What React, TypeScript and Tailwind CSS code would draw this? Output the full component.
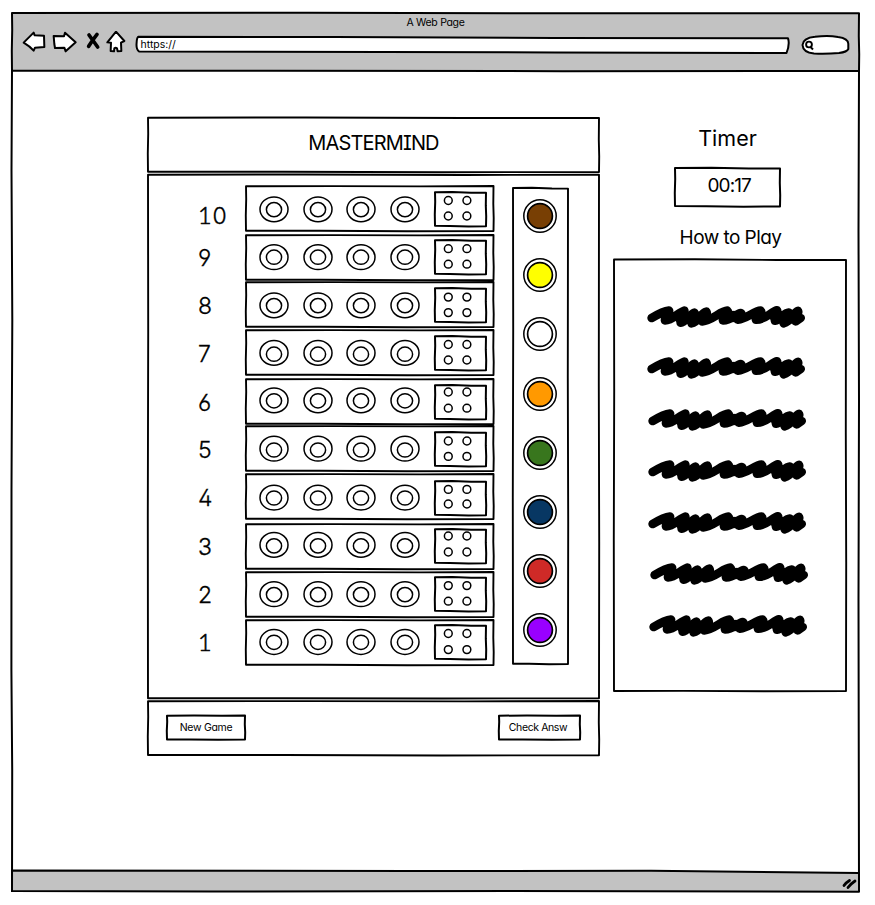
import type { ReactNode } from "react";

type Pt = [number, number];

const ui = "font-['Inter','Lato',sans-serif] [font-feature-settings:'cv11','cv08','cv02','cv03','cv04']";

/* Hand-drawn rectangle behind the content of a box. */
function Sketch({ w, h, skew = [], stroke = 1.9, fill = "white" }: { w: number; h: number; skew?: number[]; stroke?: number; fill?: string }) {
  const [a = 0, b = 0, c = 0, d = 0] = skew;
  const p: Pt[] = [[1, 1 + a], [w - 1, 1 + b], [w - 1, h - 1 + c], [1, h - 1 + d]];
  return (
    <svg className="absolute inset-0 overflow-visible" width={w} height={h} fill={fill} stroke="black" strokeWidth={stroke} strokeLinejoin="round">
      <path
        d={`M${p[0]} L${w * 0.35} ${0.8 + a} L${w * 0.7} ${1.2 + (a + b) / 2} L${p[1]} L${w - 1.2} ${h * 0.4} L${w - 0.8} ${h * 0.7} L${p[2]} L${w * 0.65} ${h - 0.8 + c} L${w * 0.3} ${h - 1.1 + (c + d) / 2} L${p[3]} L0.8 ${h * 0.65} L1.2 ${h * 0.3}Z`}
      />
    </svg>
  );
}

function Box({ w, h, className = "", skew, stroke, fill, children }: { w: number; h: number; className?: string; skew?: number[]; stroke?: number; fill?: string; children?: ReactNode }) {
  return (
    <div className={`relative shrink-0 ${className}`} style={{ width: w, height: h }}>
      <Sketch w={w} h={h} skew={skew} stroke={stroke} fill={fill} />
      {children}
    </div>
  );
}

/* Line centres measured down the board: frame, sockets, inner rings, peg frame, pegs, label. */
const rows = [
  { n: "10", top: 186, ring: 209.3, inner: 209.6, pegBox: 192, pegs: [200.5, 216], label: 216 },
  { n: "9", top: 235, ring: 257.2, inner: 257.2, pegBox: 240, pegs: [248.7, 264.2], label: 258 },
  { n: "8", top: 282.2, ring: 305.5, inner: 305.8, pegBox: 287.6, pegs: [296.7, 312.2], label: 306 },
  { n: "7", top: 330.3, ring: 353.2, inner: 354.5, pegBox: 336.2, pegs: [344.7, 360.2], label: 353.8 },
  { n: "6", top: 379, ring: 400.4, inner: 400.8, pegBox: 385, pegs: [392, 408.2], label: 402.8 },
  { n: "5", top: 426.5, ring: 449.2, inner: 450.5, pegBox: 431.8, pegs: [440.8, 456.2], label: 450.2 },
  { n: "4", top: 474.5, ring: 498.2, inner: 498.5, pegBox: 481.2, pegs: [489.6, 504.2], label: 498 },
  { n: "3", top: 524, ring: 544.9, inner: 545.9, pegBox: 529.2, pegs: [536.2, 552.2], label: 547 },
  { n: "2", top: 572, ring: 594.2, inner: 594.6, pegBox: 577, pegs: [585.6, 601.2], label: 595.1 },
  { n: "1", top: 620.2, ring: 642.2, inner: 642.5, pegBox: 625.2, pegs: [633.7, 649.8], label: 642.6 },
];

const colours = ["#783f04", "#ffff00", "#ffffff", "#ff9900", "#38761d", "#073763", "#cf2a27", "#9900ff"];
const hints = [0.3, 0.3, 1.3, 1.8, 1.8, 3.5, 2.8];

function Digits({ n }: { n: string }) {
  return (
    <>
      {n.split("").map((d, i) => (
        <span key={i} className={d === "1" ? "font-['Lato',sans-serif] text-[23.5px] font-light tracking-[0.8px] [-webkit-text-stroke:0.6px_black]" : "text-[23px] font-light [-webkit-text-stroke:0.3px_black]"}>{d}</span>
      ))}
    </>
  );
}

function Row({ r, next }: { r: (typeof rows)[number]; next: number }) {
  return (
    <div className="flex items-start" style={{ height: next - r.top }}>
      <div className="flex h-6 w-[47px] shrink-0 items-center" style={{ marginTop: r.label - r.top - 11 }}>
        <Digits n={r.n} />
      </div>
      <Box w={249.5} h={47} skew={[0.3, 0, 0, -0.3]} className="flex">
        <div className="relative flex pl-[13.5px]">
          {[44, 43.3, 44, 44].map((w, i) => (
            <svg key={i} width={w} height={47} fill="none" stroke="black" strokeWidth="1.5">
              <ellipse cx="15" cy={r.ring - r.top + 1} rx="14" ry="12.4" />
              <ellipse cx="15" cy={r.inner - r.top + 1} rx="7.6" ry="7.1" />
            </svg>
          ))}
        </div>
        <div style={{ paddingTop: r.pegBox - r.top }}>
          <Box w={53} h={36} skew={[0.3, 0.7, 0.2, -0.2]} stroke={2}>
            <svg className="relative" width={53} height={36} fill="none" stroke="black" strokeWidth="1.5">
              {r.pegs.map((y) => [14.3, 32.9].map((x) => <circle key={`${x}-${y}`} cx={x} cy={y - r.pegBox + 1} r="3.9" />))}
            </svg>
          </Box>
        </div>
      </Box>
    </div>
  );
}

function Toolbar() {
  return (
    <header className="relative h-[58px] w-[847px]">
      <Box w={849} h={60} fill="#c2c2c2" skew={[0, 0.3, 0, -0.3]} stroke={2} className="-ml-px">
        <div className={`relative flex h-[20px] items-center justify-center pt-[3px] text-[10.5px] leading-none ${ui}`}>
          <span className="tracking-[-0.3px]">A Web Page</span>
        </div>
        <div className="relative flex items-start">
          <svg className="ml-[11px] -mt-[1px]" width="113" height="26" viewBox="66 92 339 78" fill="white" stroke="black" strokeWidth="6" strokeLinejoin="round" strokeLinecap="round">
            <path d="M71 127 101 97l3 8 28 1 1 34-28 2-4 9q-10-12-30-24Z" />
            <path d="m161 107 31 1 3-11 32 29-30 27-4-11-28 1-2-12Z" />
            <path d="m267 104 26 36M291 102q-12 15-25 36" strokeWidth="11" />
            <path d="m348 94 25 28-10 5 1 25-11 1-2-9q-4-3-8 0l-1 9-10-1 1-25-11-1Z" />
          </svg>
          <div className="relative h-[22px] w-[655px]">
            <svg className="absolute inset-0" width="655" height="22" fill="white" stroke="black" strokeWidth="2" strokeLinejoin="round">
              <path d="M3.5 4.7 200 5 420 6 653 6.3Q655 12 651.5 21L420 20.4 4 19.4Q1 17.5 1.6 11Q1.8 5.5 3.5 4.7Z" />
            </svg>
            <span className={`relative block pl-[5.5px] pt-[6.5px] text-[10.5px] leading-[12px] ${ui}`}>https://</span>
          </div>
          <svg className="ml-[10px] mt-[1.5px]" width="52" height="24" fill="white" stroke="black" strokeWidth="2">
            <path d="M2.5 11Q3 4 15 2.8 28 .9 38 3 48.5 4.500 48.3 10L48.3 15Q47 18 39 19 27 20 14 19.5 3 18.5 2.5 11Z" />
            <circle cx="9" cy="10.5" r="2.9" strokeWidth="1.9" />
            <path d="m10.5 13 2.5 2.5" />
          </svg>
        </div>
      </Box>
    </header>
  );
}

function Board() {
  return (
    <section className={`w-[453px] ${ui}`}>
      <Box w={453} h={56} className="flex items-center justify-center" skew={[-0.3, 0, 0, -0.3]}>
        <h1 className="relative -mt-[5px] text-[20px] font-normal leading-none tracking-[-0.85px]">MASTERMIND</h1>
      </Box>
      <Box w={453} h={525} className="mt-px flex pl-[51px] pt-[11px]" skew={[-0.3, -0.2, 0.3, 0.3]}>
        <div className="relative w-[297px]">
          {rows.map((r, i) => <Row key={r.n} r={r} next={rows[i + 1]?.top ?? 668} />)}
        </div>
        <Box w={57} h={478} skew={[0, 0.6, 0, -0.3]} className="mt-[2px] ml-[17px] flex flex-col items-center pt-[12.2px]">
          {colours.map((c) => (
            <svg key={c} className="relative -left-[0.5px] shrink-0" width="34" height="59.15" stroke="black" strokeWidth="1.5">
              <circle cx="17" cy="17" r="16.2" fill="white" />
              <circle cx="17" cy="17" r="12.4" fill={c} strokeWidth="1.7" />
            </svg>
          ))}
        </Box>
      </Box>
      <Box w={453} h={56} className="mt-px flex items-start justify-between pl-[19px] pr-[19.5px] pt-[14px] text-[10.5px]" skew={[0.3, 0, 0.3, 0]}>
        <Box w={80} h={26} className="flex items-center justify-center" skew={[0.7, 0.5, 0.5, 0.5]} stroke={2}>
          <button className="relative mt-px tracking-[-0.3px]">New Game</button>
        </Box>
        <Box w={83} h={26} className="flex items-center justify-center" skew={[0.7, 0.5, 0.5, 0.5]} stroke={2}>
          <button className="relative mt-px mr-[2px] tracking-[-0.4px]">Check Answ</button>
        </Box>
      </Box>
    </section>
  );
}

function Help() {
  return (
    <aside className={`ml-[12.5px] flex w-[235px] flex-col items-center ${ui}`}>
      <div className="mt-[10px] mr-[5px] h-[40px] text-[21.5px] leading-[22px]">Timer</div>
      <Box w={107} h={40} skew={[0, 0.5, 0.5, 0]} stroke={2} className="mr-[4.5px] flex items-center justify-center">
        <span className="relative -mt-[4px] ml-[3px] text-[19px] leading-none tracking-[-0.9px]">00:17</span>
      </Box>
      <div className="mt-[19px] h-[33px] pl-px text-[19px] leading-[24px] tracking-[-0.55px]">How to Play</div>
      <Box w={234} h={433} skew={[-0.5, 0, 0, 0]} className="flex flex-col pl-[33.7px] pt-[44.5px]">
        {hints.map((dx, i) => (
          <svg key={i} className="relative mb-[26.5px] shrink-0 overflow-visible" style={{ marginLeft: dx }} width="160" height="25" viewBox="50 40 480 75" fill="none" stroke="black" strokeWidth="26" strokeLinecap="round" strokeLinejoin="round">
            <path d="M64 82Q98 62 116 60C120 66 103 80 104 89 125 90 145 65 162 60 163 70 150 83 151 96 165 95 178 72 192 66 200 75 180 86 184 98 205 95 210 67 228 63 235 75 214 80 216 92 245 90 270 61 291 60 298 66 276 77 278 89 300 90 318 69 332 67 338 74 318 77 322 87 350 84 370 61 391 60 398 66 374 77 377 87 405 88 423 63 440 59 445 68 430 75 434 90 452 88 460 67 475 66 480 80 458 82 460 98 485 92 488 65 503 61 508 72 490 78 496 92L511 82" />
            <path d="M150 82 190 81 228 80M290 77 330 78M435 78 470 80 498 80" strokeWidth="34" />
          </svg>
        ))}
      </Box>
    </aside>
  );
}

export default function App() {
  return (
    <div className="h-[905px] w-[875px] bg-white pl-[12px] pt-[12px] text-black">
      <div className="flex h-[881px] w-[847px] flex-col">
        <Toolbar />
        <main className="relative flex h-[800px] items-start pl-[135px] pt-[47px]">
          <svg className="absolute left-0 top-0 overflow-visible" width="847" height="822" fill="none" stroke="black" strokeWidth="2">
            <path d="M0 0-.5 100 .3 250-.5 420-.6 600 .2 700 0 822M847 0l-.5 160 .5 170-.5 200 .5 290" />
          </svg>
          <Board />
          <Help />
        </main>
        <footer className="-ml-px h-[23px]">
          <svg className="overflow-visible" width="849" height="23" stroke="black" strokeWidth="2" strokeLinejoin="round">
            <path d="M1 .5 400 1 640 .8 848 3V21.8L500 21 200 21.5 1 21Z" fill="#c2c2c2" />
            <path d="M833 15.5q1.500-2.500 5.500-5M837 17.5q2.500-3.500 7-6.500" fill="none" strokeWidth="2.8" strokeLinecap="round" />
          </svg>
        </footer>
      </div>
    </div>
  );
}
